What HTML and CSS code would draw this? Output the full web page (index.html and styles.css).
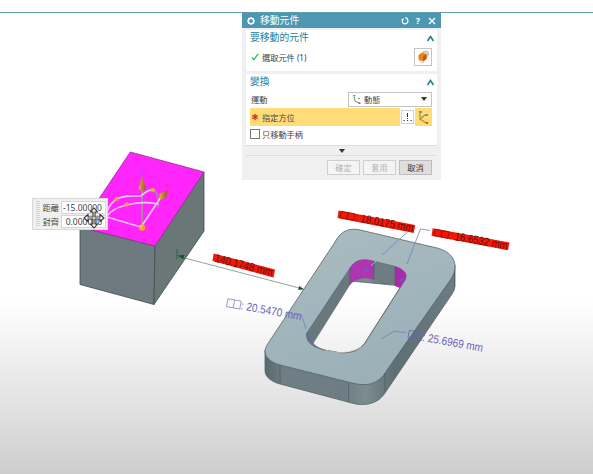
FILE: index.html
```html
<!DOCTYPE html>
<html lang="zh-Hant">
<head>
<meta charset="utf-8">
<title>移動元件</title>
<link rel="stylesheet" href="styles.css">
</head>
<body>
<main class="viewport">
  <svg class="scene" viewBox="0 0 593 474" width="593" height="474">
    <defs>
      <linearGradient id="top" x1="0" y1="0" x2="0.4" y2="1"><stop offset="0" stop-color="#a9bcc2"/><stop offset="1" stop-color="#9bb0b7"/></linearGradient>
      <linearGradient id="side" x1="0" y1="0" x2="1" y2="0"><stop offset="0" stop-color="#58696e"/><stop offset=".1" stop-color="#6f7f85"/><stop offset=".42" stop-color="#6d7d83"/><stop offset=".53" stop-color="#7c8c91"/><stop offset=".68" stop-color="#5e6f73"/><stop offset="1" stop-color="#6c7c80"/></linearGradient>
      <linearGradient id="cone" x1="0" y1="0" x2="1" y2="0"><stop offset="0" stop-color="#e2b13c"/><stop offset="1" stop-color="#8e5a1c"/></linearGradient>
    </defs>

    <g stroke="#3f4c50" stroke-width=".8" stroke-linejoin="round">
      <path fill="#6d7b80" d="M80 227L155 246L154 304.5L80 284.5Z"/>
      <path fill="#6a7777" d="M204 172V231L154 304.5L155 246Z"/>
      <path fill="#ff25fb" stroke="#8d318e" d="M130.3 152L204 172L155 246L80 227Z"/>
    </g>

    <g stroke="#53646a" stroke-width=".8">
      <path fill="url(#side)" fill-rule="evenodd" d="M265 350V371C265 377 272 382 280 384L348 402C363 407 377 405 385 393L452 294Q455 290 455 286V265L392 285L340 280L300 340Z M309 337L350 270C354 261 361 259 368 260L389 265C400 267 409 272 405 280L365 343C359 351 349 354 338 352.5L324 350Q313 347 309 337Z"/>
      <path fill="url(#top)" fill-rule="evenodd" d="M267 345L335 242C340 233 346 228 358 229.5L437 248C449 251 458 259 454 273Q453 276 451 279L387 370C380 382 371 387 354 383.5L280 365C267 361 262 354 267 345Z M307 333L350 268C354 261 361 259 368 260L389 265C400 267 409 272 405 280L365 343C359 351 349 354 338 352.5L324 350C314 347 305 343 307 333Z"/>
    </g>
    <path fill="#68787c" d="M307 333L350 268V285L313 344Q305 341 307 333Z"/>
    <path fill="#ad35af" d="M350 268C354 261 361 259 368 260L374 261V279.5C363 277 356 278 350 285Z"/>
    <path fill="#6d7d81" d="M374 261L395 266.5V286L374 279.5Z"/>
    <path fill="#a92bad" d="M395 266.5C403 269 408 273 405.5 279L400 288L395 286Z"/>
    <path fill="none" stroke="#4d5d62" stroke-width=".7" d="M280 365V384M348.500 383V402M385 373V392M454.500 270V286M374 261V279.5M395 267V286M350 268V285"/>
    <path fill="none" stroke="#d2cdbd" stroke-width=".7" d="M325 350C341 355 352 352 361 347M371 266L376 261"/>
    <path fill="none" stroke="#6552b5" stroke-width="1" d="M306.500 333Q307 339 313 343"/>
    <path fill="none" stroke="#6860d0" stroke-width="1.400" d="M364 269L369 271M400 281L404 278"/>

    <g fill="none" stroke="#7482ba" stroke-width=".8">
      <path d="M407.500 232L382 255M430 230.500L420.500 229L407 264M381 339L394.500 331L406.500 332.700M301.500 315L306 329"/>
    </g>
    <path d="M177 256L303 289" stroke="#638064" stroke-width=".7"/>
    <path d="M177 249V259" stroke="#286141" stroke-width=".9"/>
    <path d="M177.500 255.500L184.500 255L183.300 259.200ZM304 289.300L298.200 290L299.200 286Z" fill="#145425"/>

    <g fill="#f71505">
      <path d="M213.700 253.500L275 269.500L273.500 277.500L212.500 261Z"/>
      <path d="M338.500 210.500L415.200 225L413.800 233L337.500 218Z"/>
      <path d="M432.700 228.200L509.500 242.500L508 250.200L431.500 235.800Z"/>
    </g>
    <g class="measure" fill="#5d1512">
      <text transform="translate(214 261.500) rotate(14.500)" textLength="59.500" lengthAdjust="spacingAndGlyphs">140.1748 mm</text>
      <g transform="translate(339 218) rotate(10.800)"><path class="tofu" stroke="#8d120c" d="M1 -7H15V-.5H1ZM8 -7V-.5"/><text x="16" textLength="59" lengthAdjust="spacingAndGlyphs">: 18.0175 mm</text></g>
      <g transform="translate(433 236) rotate(10.500)"><path class="tofu" stroke="#8d120c" d="M1 -7H15V-.5H1ZM8 -7V-.5"/><text x="16" textLength="59" lengthAdjust="spacingAndGlyphs">: 16.6532 mm</text></g>
    </g>
    <g class="measure" fill="#6a63b8">
      <g transform="translate(226 306.500) rotate(10.500)"><path class="tofu" stroke="#8d88c8" d="M.5 -8H14V0H.5ZM7.300 -8V0"/><text x="14.500" textLength="61.500" lengthAdjust="spacingAndGlyphs">: 20.5470 mm</text></g>
      <g transform="translate(407.500 338) rotate(10.500)"><path class="tofu" stroke="#6a63b8" d="M.5 -8H14V0H.5ZM7.300 -8V0"/><text x="14.500" textLength="61.500" lengthAdjust="spacingAndGlyphs">: 25.6969 mm</text></g>
    </g>

    <g fill="none" stroke-linecap="round">
      <path stroke="#a487a6" stroke-width="2" d="M142 190V227M142 196Q149 187 154 190Q159 194 158 207"/>
      <path stroke="#edc5f0" stroke-width="1.700" d="M107 217L141 227L161 197M107 216C114 206 137 200 158 204M107 212C112 197 123 195 141 196Q147 190 153 190"/>
    </g>
    <path fill="url(#cone)" d="M142.200 176L146 189Q142 192 138.500 189Z"/>
    <path fill="url(#cone)" d="M167.500 190L166 198L160 199.500L159.500 194Z"/>
    <g fill="#eda62e"><circle cx="116.500" cy="198.800" r="2.100"/><circle cx="127" cy="204.500" r="2.100"/><circle cx="153" cy="190" r="2.100"/><circle cx="142" cy="227.500" r="3.200"/></g>
    <circle cx="141" cy="226.300" r="1" fill="#ffe07a"/>
    <g class="axis"><text x="137" y="174" fill="#a950ed">ZC</text><text x="164" y="188" fill="#f92c9c">XC</text></g>
  </svg>

  <section class="coords">
    <span class="grip"></span>
    <div class="coord-fields">
      <div class="coord"><span>距離</span><output>-15.00000</output></div>
      <div class="coord"><span>對齊</span><output>0.000000</output></div>
    </div>
  </section>
  <svg class="cursor" viewBox="0 0 22 22" width="22" height="22"><path d="M11 1L14.500 5H12V10H17V7.500L21 11L17 14.500V12H12V17H14.500L11 21L7.500 17H10V12H5V14.500L1 11L5 7.500V10H10V5H7.500Z" fill="#fff" stroke="#303030" stroke-width="1.100"/></svg>

  <section class="dialog">
    <header class="titlebar">
      <svg width="10" height="10" viewBox="0 0 10 10"><circle cx="5" cy="5" r="2.700" fill="none" stroke="#fff" stroke-width="1.500"/><path d="M5 1V2M5 8V9M1 5H2M8 5H9M2.200 2.200L3 3M7 7L7.800 7.800M2.200 7.800L3 7M7 3L7.800 2.200" stroke="#fff"/></svg>
      <h1>移動元件</h1>
      <svg width="8" height="9" viewBox="0 0 8 9"><path d="M1.500 3.500Q.5 7.500 4 7.800Q7.500 7.500 6.800 4Q6.300 2 4.200 1.700M.5 3.500L3 3" fill="none" stroke="#fff" stroke-width="1.200"/></svg>
      <b>?</b>
      <svg width="8" height="8" viewBox="0 0 8 8"><path d="M1 1L7 7M7 1L1 7" stroke="#fff" stroke-width="1.400"/></svg>
    </header>
    <section class="panel pick">
      <div class="heading"><h2>要移動的元件</h2><svg class="chev" viewBox="0 0 8 7"><path d="M1 6L4 1.500L7 6"/></svg></div>
      <div class="row">
        <svg class="mark" viewBox="0 0 9 9"><path d="M1 5L3.200 7.500L8 1" fill="none" stroke="#2dbb53" stroke-width="1.400"/></svg>
        <span class="label">選取元件 (1)</span>
        <button class="cube"><svg width="13" height="14" viewBox="0 0 13 14"><circle cx="8.500" cy="4" r="3" fill="#ddd" stroke="#999" stroke-width=".7"/><path d="M1.500 5L5 2.500L9.500 4V9L6 11.500L1.500 9.500Z" fill="#f08114"/><path d="M6 6.300L9.500 4V9L6 11.500Z" fill="#bd5c12"/><path d="M2 10L5.500 13L7 11.500" fill="none" stroke="#aaa" stroke-width=".8"/></svg></button>
      </div>
    </section>
    <section class="panel transform">
      <div class="heading"><h2>變換</h2><svg class="chev" viewBox="0 0 8 7"><path d="M1 6L4 1.500L7 6"/></svg></div>
      <div class="motion"><span class="label">運動</span><div class="select"><svg width="9" height="11" viewBox="0 0 9 11"><path d="M2 2L3 7L8 9.500" fill="none" stroke="#75877f"/><path d="M1 1.500H3.500M6 4.500H8" stroke="#6ba878"/><path d="M6.500 9L8.500 9.500" stroke="#dd4c3e" stroke-width="1.400"/></svg><span>動態</span><i></i></div></div>
      <div class="orient">
        <div class="field"><svg class="mark" viewBox="0 0 9 9"><path d="M4.500 1V8M1.400 2.700L7.600 6.300M7.600 2.700L1.400 6.300" stroke="#df3210" stroke-width="1.500"/></svg><span class="label">指定方位</span></div>
        <button class="dots"><svg width="11" height="12" viewBox="0 0 11 12"><path d="M5.500 2V6" stroke="#333"/><path d="M1.500 9.500H2.700M5 9.500H6.200M8.500 9.500H9.700M5 7.500H6" stroke="#333" stroke-width="1"/></svg></button>
        <div class="csys"><svg width="13" height="15" viewBox="0 0 13 15"><path d="M3 3V9L8 5" fill="none" stroke="#79a73a" stroke-width="1.100"/><path d="M3 9L9 13" stroke="#e47832" stroke-width="1.300"/><path d="M2 2H5M8 5H11" stroke="#587c9c" stroke-width="1.300"/><path d="M9 12L11 14M11 12L9 14" stroke="#bb612c"/></svg></div>
      </div>
      <label class="check"><i></i><span>只移動手柄</span></label>
    </section>
    <div class="more"><i></i></div>
    <footer><button disabled>確定</button><button disabled>套用</button><button class="cancel">取消</button></footer>
  </section>
</main>
</body>
</html>
```
FILE: styles.css
```css
* { box-sizing: border-box; }
body { margin: 0; font: 8.2px "Noto Sans", "Noto Sans CJK TC", sans-serif; color: #454545; }
.viewport { position: relative; width: 593px; height: 474px; overflow: hidden; background: linear-gradient(#fff 0 300px, #ededed 365px, #dedede 420px, #cdcdcd 474px); }
.viewport::before { content: ""; position: absolute; top: 12px; width: 100%; height: 1px; background: #5e9cab; }
.scene { display: block; }
.measure { font: 11.5px "Liberation Sans", sans-serif; }
.tofu { fill: none; stroke-width: .8; }
.axis { font: 7px "Liberation Sans", sans-serif; }
svg { flex: none; }
h1, h2 { margin: 0; font-size: 9.8px; font-weight: 400; line-height: 14px; }
button { margin: 0; padding: 0; border: 1px solid #c4c4c4; background: #fff; font: inherit; color: inherit; }

.coords { position: absolute; left: 32px; top: 198px; display: flex; width: 76px; height: 32px; padding: 2px 1px 2px 3px; border: 1px solid #d8d8d8; background: #f0f0f0; }
.grip { width: 5px; margin-right: 3px; background: repeating-linear-gradient(#d7d7d7 0 1px, #f0f0f0 1px 2px); }
.coord-fields { flex: 1; display: flex; flex-direction: column; gap: 1px; }
.coord { display: flex; align-items: center; justify-content: flex-end; gap: 2px; height: 13px; line-height: 12px; white-space: nowrap; }
.coord output { width: 45px; height: 13px; padding-right: 3px; background: #fff; border: 1px solid #d5d5d5; font-size: 8.5px; line-height: 11px; text-align: right; }
.cursor { position: absolute; left: 83px; top: 207px; }

.dialog { position: absolute; left: 242px; top: 13px; width: 199px; height: 167px; padding: 0 4px; background: #f0f0f0; }
.titlebar { display: flex; align-items: center; height: 15px; margin: 0 -4px 2px; padding: 0 5px 0 4px; background: #4c98b3; color: #fff; }
.titlebar h1 { flex: 1; margin-left: 4px; }
.titlebar b { width: 14px; text-align: center; font-size: 9px; margin: 0 3px 0 2px; }
.panel { background: #fff; padding: 0 5px 0 4px; }
.pick { height: 41px; margin-bottom: 3px; }
.transform { height: 71px; }
.heading { display: flex; align-items: center; justify-content: space-between; height: 16px; margin-right: -3px; color: #277f9f; }
.chev { width: 9px; height: 7px; fill: none; stroke: #287f91; stroke-width: 1.6; }
.row { display: flex; align-items: center; height: 22px; }
.mark { width: 8px; height: 8px; margin: 0 3px 0 1px; }
.label { flex: 1; }
.cube { display: grid; place-items: center; width: 18px; height: 18px; margin-top: -1px; }
.motion { display: flex; align-items: center; height: 18px; padding: 1px 0; padding-left: 1px; }
.select { display: flex; align-items: center; width: 84px; height: 15px; padding: 0 4px 0 3px; border: 1px solid #c4c4c4; }
.select span { flex: 1; margin-left: 3px; }
.select i, .more i { border: 3px solid transparent; border-top: 4px solid #333; border-bottom: 0; }
.orient { display: flex; height: 18px; }
.field { flex: 1; display: flex; align-items: center; background: #ffdc78; }
.dots { display: grid; place-items: center; width: 13px; height: 14px; margin: 2px 1px; border-color: #d1d1d1; }
.csys { display: grid; place-items: center; width: 17px; background: #ffdc78; }
.check { display: flex; align-items: center; height: 15px; gap: 2px; }
.check i { width: 10px; height: 10px; border: 1px solid #777; }
.more { display: grid; place-items: center; height: 11px; border-top: 1px solid #dedede; border-bottom: 1px solid #dcdcdc; }
footer { display: flex; justify-content: flex-end; gap: 3px; padding: 4px 5px 0 0; }
footer button { width: 33px; height: 15px; background: #f4f4f4; border-color: #cfcfcf; color: #b3b3b3; line-height: 12px; }
footer .cancel { background: #dedede; border-color: #bdbdbd; color: #333; }
```
